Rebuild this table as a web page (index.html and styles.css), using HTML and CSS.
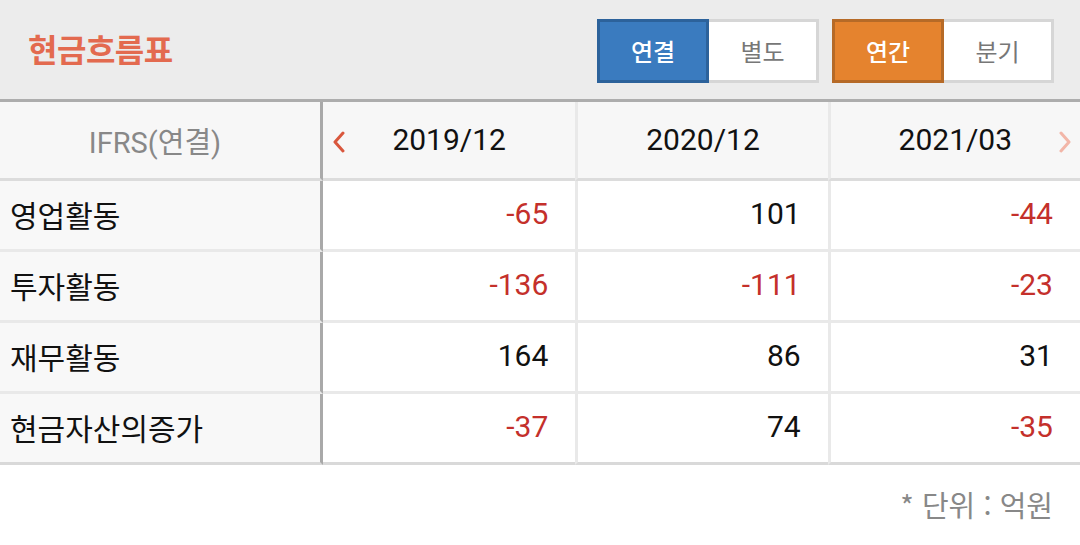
FILE: index.html
```html
<!DOCTYPE html>
<html lang="ko">
<head>
<meta charset="utf-8">
<title>현금흐름표</title>
<link rel="stylesheet" href="styles.css">
</head>
<body>
<div class="card">
  <div class="head">
    <h1 class="title">현금흐름표</h1>
    <div class="seg">
      <span class="btn on blue">연결</span>
      <span class="btn">별도</span>
    </div>
    <div class="seg seg2">
      <span class="btn on orange">연간</span>
      <span class="btn">분기</span>
    </div>
  </div>
  <div class="grid">
    <div class="cell lab th">IFRS(연결)</div>
    <div class="cell th date">
      <svg class="chev prev" width="14" height="22" viewBox="0 0 14 22"><path d="M11 2 L3 11 L11 20" fill="none" stroke="#d9573d" stroke-width="3" stroke-linecap="round" stroke-linejoin="round"/></svg>
      2019/12
    </div>
    <div class="cell th date sep">2020/12</div>
    <div class="cell th date sep">2021/03
      <svg class="chev next" width="14" height="22" viewBox="0 0 14 22"><path d="M3 2 L11 11 L3 20" fill="none" stroke="#f2b6a8" stroke-width="3" stroke-linecap="round" stroke-linejoin="round"/></svg>
    </div>

    <div class="cell lab">영업활동</div>
    <div class="cell num neg">-65</div>
    <div class="cell num sep">101</div>
    <div class="cell num sep neg">-44</div>

    <div class="cell lab">투자활동</div>
    <div class="cell num neg">-136</div>
    <div class="cell num sep neg">-111</div>
    <div class="cell num sep neg">-23</div>

    <div class="cell lab">재무활동</div>
    <div class="cell num">164</div>
    <div class="cell num sep">86</div>
    <div class="cell num sep">31</div>

    <div class="cell lab last">현금자산의증가</div>
    <div class="cell num neg last">-37</div>
    <div class="cell num sep last">74</div>
    <div class="cell num sep neg last">-35</div>
  </div>
  <div class="foot">* 단위 : 억원</div>
</div>
</body>
</html>
```

FILE: styles.css
```css
html, body {
  margin: 0;
  padding: 0;
  background: #ffffff;
}
body {
  font-family: Roboto, "Noto Sans CJK KR", sans-serif;
  color: #111;
  width: 1080px;
}
.head {
  height: 99px;
  background: #ececec;
  border-bottom: 3px solid #adadad;
  display: flex;
  align-items: center;
  padding: 0 26px 0 28px;
  box-sizing: content-box;
}
.title {
  margin: 0;
  flex: 1;
  font-family: "Noto Sans CJK KR", sans-serif;
  font-size: 32px;
  font-weight: 700;
  color: #e36a4f;
  letter-spacing: -0.5px;
  position: relative;
  top: -2px;
}
.seg {
  display: flex;
  height: 64px;
  position: relative;
  top: 1px;
}
.seg2 {
  margin-left: 13px;
}
.btn {
  box-sizing: border-box;
  width: 110px;
  height: 64px;
  border: 3px solid #d6d6d6;
  background: #fff;
  display: flex;
  align-items: center;
  justify-content: center;
  font-family: "Noto Sans CJK KR", sans-serif;
  font-size: 24px;
  color: #777;
}
.btn + .btn {
  border-left: 0;
}
.btn.on {
  width: 112px;
  color: #fff;
  font-weight: 500;
}
.btn.blue {
  background: #3a7bbf;
  border-color: #2c629b;
}
.btn.orange {
  background: #e5832e;
  border-color: #b66a27;
}
.grid {
  display: grid;
  grid-template-columns: 323px repeat(3, 1fr);
}
.cell {
  box-sizing: border-box;
  height: 71px;
  padding-bottom: 3px;
  border-bottom: 3px solid #e9e9e9;
  background: #fff;
  display: flex;
  align-items: center;
  font-size: 30px;
}
.lab {
  background: #f8f8f8;
  border-right: 3px solid #a9a9a9;
  padding-left: 10px;
  font-family: "Noto Sans CJK KR", sans-serif;
  font-size: 30px;
  color: #111;
}
.th {
  height: 79px;
  padding-bottom: 1px;
  background: #f7f7f7;
  border-bottom: 3px solid #dcdcdc;
}
.lab.th {
  justify-content: center;
  padding-left: 0;
  padding-right: 10px;
  font-family: Roboto, "Noto Sans CJK KR", sans-serif;
  font-size: 29px;
  color: #888;
}
.date {
  justify-content: center;
  position: relative;
  color: #111;
}
.sep {
  border-left: 3px solid #e9e9e9;
}
.num {
  justify-content: flex-end;
  padding-right: 27px;
}
.neg {
  color: #c4302b;
}
.last {
  border-bottom-color: #d9d9d9;
}
.chev {
  position: absolute;
  top: 29px;
}
.chev.prev {
  left: 9px;
}
.chev.next {
  right: 8px;
}
.foot {
  height: 78px;
  display: flex;
  align-items: center;
  justify-content: flex-end;
  padding-right: 27px;
  font-family: "Noto Sans CJK KR", sans-serif;
  font-size: 29px;
  color: #888;
}
```
